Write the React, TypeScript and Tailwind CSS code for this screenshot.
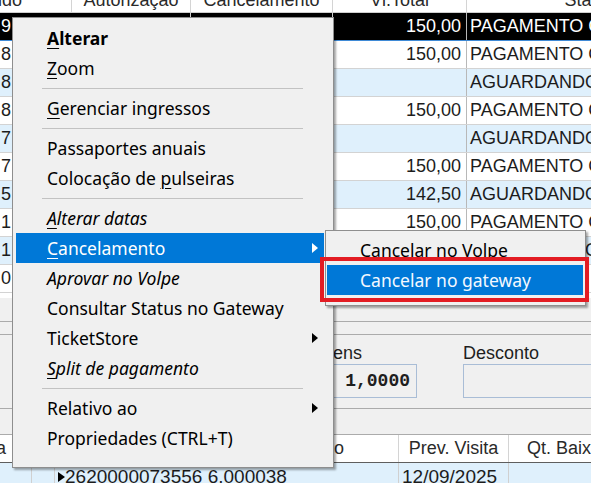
import type { ReactNode } from "react"

interface Row {
  id: string
  total: string
  status: string
  selected?: boolean
}

const ROWS: Row[] = [
  { id: "9", total: "150,00", status: "PAGAMENTO CONFIRMADO", selected: true },
  { id: "8", total: "150,00", status: "PAGAMENTO CONFIRMADO" },
  { id: "8", total: "", status: "AGUARDANDO PAGAMENTO" },
  { id: "8", total: "150,00", status: "PAGAMENTO CONFIRMADO" },
  { id: "7", total: "", status: "AGUARDANDO PAGAMENTO" },
  { id: "7", total: "150,00", status: "PAGAMENTO CONFIRMADO" },
  { id: "5", total: "142,50", status: "AGUARDANDO PAGAMENTO" },
  { id: "1", total: "150,00", status: "PAGAMENTO CONFIRMADO" },
  { id: "1", total: "", status: "AGUARDANDO PAGAMENTO" },
  { id: "0", total: "", status: "" },
]

type MenuEntry =
  | { sep: true }
  | { label: ReactNode; bold?: boolean; italic?: boolean; arrow?: boolean; active?: boolean }

// underlined access key letter
const K = ({ c }: { c: string }) => <span className="underline decoration-1 underline-offset-[3px]">{c}</span>

const MAIN_MENU: MenuEntry[] = [
  { label: <><K c="A" />lterar</>, bold: true },
  { label: <><K c="Z" />oom</> },
  { sep: true },
  { label: <><K c="G" />erenciar ingressos</> },
  { sep: true },
  { label: "Passaportes anuais" },
  { label: <>Colocação de <K c="p" />ulseiras</> },
  { sep: true },
  { label: <><K c="A" />lterar datas</>, italic: true },
  { label: <><K c="C" />ancelamento</>, arrow: true, active: true },
  { label: "Aprovar no Volpe", italic: true },
  { label: "Consultar Status no Gateway" },
  { label: "TicketStore", arrow: true },
  { label: <><K c="S" />plit de pagamento</>, italic: true },
  { sep: true },
  { label: "Relativo ao", arrow: true },
  { label: "Propriedades (CTRL+T)" },
]

function Arrow({ white }: { white?: boolean }) {
  return (
    <svg width="6" height="10" viewBox="0 0 6 10" className="ml-auto shrink-0">
      <path d="M0 0 L6 5 L0 10 Z" fill={white ? "#ffffff" : "#000000"} />
    </svg>
  )
}

function RowMarker() {
  return (
    <svg width="7" height="10" viewBox="0 0 7 10" className="shrink-0">
      <path d="M0 0 L7 5 L0 10 Z" fill="#000000" />
    </svg>
  )
}

function TopGrid() {
  return (
    <div className="h-[298px] bg-white overflow-hidden text-[18px] text-[#1c1c1c]">
      {/* column headers */}
      <div className="mt-[-11px] h-[24px] flex border-b border-[#cfcfcf] text-[#2a2a2a] whitespace-nowrap">
        <div className="w-[72px] shrink-0 flex items-center justify-end pr-[49px] border-r border-[#d4d4d4] overflow-hidden">Pedido</div>
        <div className="w-[119px] shrink-0 flex items-center justify-center border-r border-[#d4d4d4]">Autorização</div>
        <div className="w-[142px] shrink-0 flex items-center justify-center border-r border-[#d4d4d4]">Cancelamento</div>
        <div className="w-[134px] shrink-0 flex items-center justify-center border-r border-[#d4d4d4]">Vl.Total</div>
        <div className="w-[246px] shrink-0 flex items-center justify-center">Status</div>
      </div>

      {ROWS.map((r, i) => (
        <div
          key={i}
          className={
            r.selected
              ? "h-[28px] flex bg-black text-white border-b border-[#3f8ad6]"
              : i % 2 === 0
                ? "h-[28px] flex bg-[#dff0fc] border-b border-[#d3d3d3]"
                : "h-[28px] flex bg-white border-b border-[#d3d3d3]"
          }
        >
          <div className="w-[12px] shrink-0 flex items-center justify-end pr-[1px]">{r.id}</div>
          <div className="w-[179px] shrink-0 border-r border-[#d0d0d0]" />
          <div className="w-[142px] shrink-0 border-r border-[#d0d0d0]" />
          <div className="w-[134px] shrink-0 flex items-center justify-end pr-[5px] border-r border-[#b8b8b8]">{r.total}</div>
          <div className="flex-1 min-w-0 flex items-center pl-[3px] whitespace-nowrap overflow-hidden">{r.status}</div>
        </div>
      ))}
    </div>
  )
}

function Panel() {
  return (
    <>
      <div className="h-[23px]" />
      <div className="h-[14px] border-t border-b border-[#ababab]" />
      <div className="h-[73px] flex pl-[284px] pt-[8px] text-[18px] text-[#1e1e1e]">
        <div className="w-[133px] shrink-0 flex flex-col">
          <span className="leading-[20px] whitespace-nowrap">Qtd. Itens</span>
          <div className="mt-[1px] h-[34px] border border-[#a9bdd6] bg-[#f0f0f0] flex items-center justify-end pr-[6px] font-['Liberation_Mono',monospace] font-bold">
            1,0000
          </div>
        </div>
        <div className="ml-[46px] w-[160px] shrink-0 flex flex-col">
          <span className="leading-[20px]">Desconto</span>
          <div className="mt-[1px] h-[34px] border border-[#a9bdd6] bg-[#f0f0f0]" />
        </div>
      </div>
      <div className="h-[27px] border-t border-b border-[#ababab]" />
    </>
  )
}

function BottomGrid() {
  return (
    <div className="text-[18px] text-[#1c1c1c] whitespace-nowrap">
      <div className="h-[28px] flex bg-white border-b border-[#5e5e5e] text-[#2a2a2a]">
        <div className="w-[32px] shrink-0 flex items-center justify-end pr-[25px] overflow-hidden border-r border-[#d4d4d4]">Data</div>
        <div className="w-[23px] shrink-0 border-r border-[#d4d4d4]" />
        <div className="w-[344px] shrink-0 flex items-center justify-end pr-[54px] border-r border-[#d4d4d4]">Ingresso</div>
        <div className="w-[110px] shrink-0 flex items-center justify-center border-r border-[#d4d4d4]">Prev. Visita</div>
        <div className="w-[110px] shrink-0 flex items-center justify-center">Qt. Baixa</div>
      </div>
      <div className="h-[28px] flex bg-[#dff0fc] text-[19px]">
        <div className="w-[32px] shrink-0 border-r border-[#d0d0d0]" />
        <div className="w-[23px] shrink-0 border-r border-[#d0d0d0]" />
        <div className="w-[344px] shrink-0 flex items-center pl-[3px] border-r border-[#d0d0d0]">
          <RowMarker />
          <span>2620000073556 6.000038</span>
        </div>
        <div className="w-[110px] shrink-0 flex items-center pl-[3px] border-r border-[#d0d0d0]">12/09/2025</div>
        <div className="flex-1" />
      </div>
    </div>
  )
}

function MainMenu() {
  return (
    <div className="absolute left-[12px] top-[17px] w-[322px] h-[451px] bg-[#f0f0f0] border border-[#8e8e8e] shadow-[2px_2px_2px_rgba(0,0,0,0.35)] pt-[5px] font-['Noto_Sans',sans-serif] text-[17.5px] text-black">
      {MAIN_MENU.map((e, i) =>
        "sep" in e ? (
          <div key={i} className="h-[10px] flex items-center ml-[29px] mr-[30px]">
            <div className="h-px w-full bg-[#c2c2c2]" />
          </div>
        ) : (
          <div
            key={i}
            className={`h-[30px] flex items-center ml-[3px] mr-[9px] pl-[31px] pr-[6px] whitespace-nowrap ${
              e.active ? "bg-[#0078d7] text-white" : ""
            } ${e.bold ? "font-bold" : ""} ${e.italic ? "italic" : ""}`}
          >
            <span>{e.label}</span>
            {e.arrow && <Arrow white={e.active} />}
          </div>
        ),
      )}
    </div>
  )
}

function SubMenu() {
  return (
    <>
      <div className="absolute left-[325px] top-[230px] w-[261px] h-[76px] bg-[#f0f0f0] border border-[#8e8e8e] shadow-[2px_2px_2px_rgba(0,0,0,0.35)] pt-[4px] font-['Noto_Sans',sans-serif] text-[17.5px] text-black">
        <div className="h-[30px] flex items-center ml-[1px] mr-[2px] pl-[33px] whitespace-nowrap">Cancelar no Volpe</div>
        <div className="h-[30px] flex items-center ml-[1px] mr-[2px] pl-[33px] whitespace-nowrap bg-[#0078d7] text-[#f4f8ff]">
          Cancelar no gateway
        </div>
      </div>
      {/* highlight frame round the chosen option */}
      <div className="absolute left-[320px] top-[257px] w-[269px] h-[45px] border-[4px] border-[#e31c23]" />
    </>
  )
}

export default function App() {
  return (
    <div className="relative w-[591px] h-[483px] overflow-hidden bg-[#f0f0f0] font-['Liberation_Sans',Arial,sans-serif]">
      <TopGrid />
      <Panel />
      <BottomGrid />
      <MainMenu />
      <SubMenu />
    </div>
  )
}
